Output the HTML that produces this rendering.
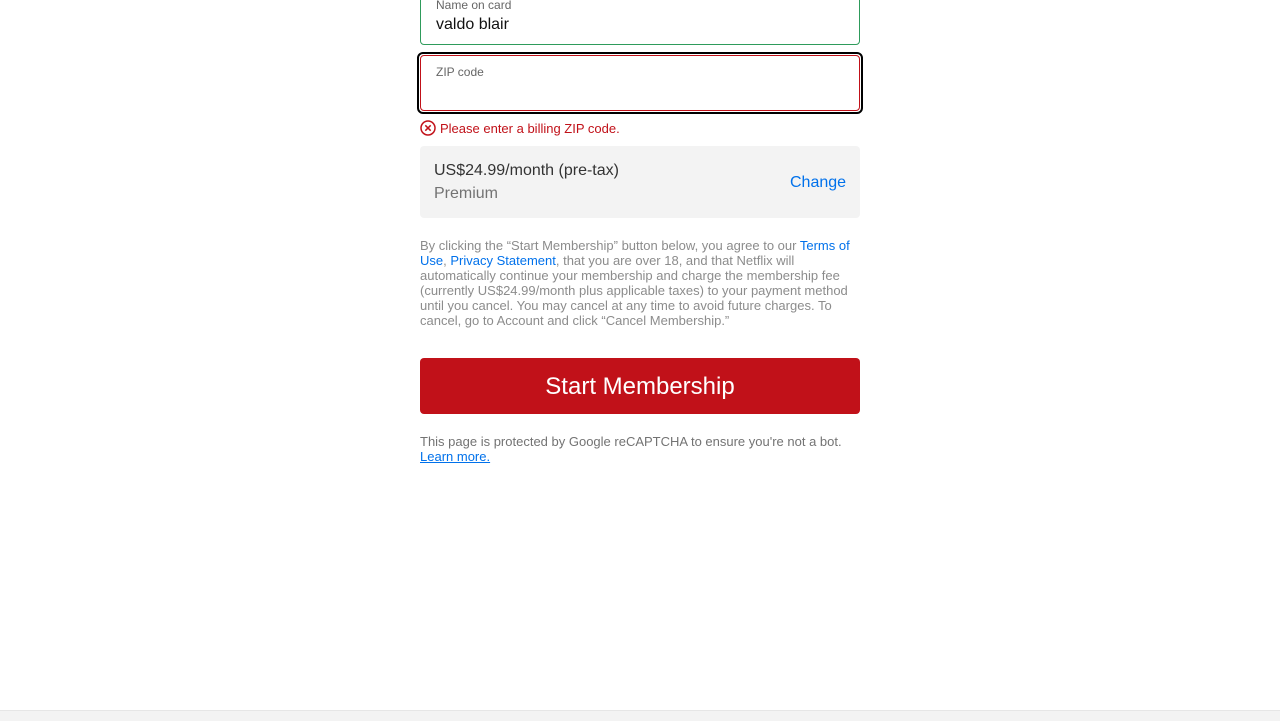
<!DOCTYPE html>
<html><head><style>
body{margin:0;width:1280px;height:720px;position:relative;background:#fff;font-family:"Liberation Sans",Arial,sans-serif;overflow:hidden}
.abs{position:absolute}
a{color:#0071eb;text-decoration:none}
</style></head><body>
<div class="abs" style="left:420px;top:-10px;width:438px;height:53px;border:1px solid #2e9b5b;border-radius:4px"></div>
<div class="abs" style="left:436px;top:-2px;font-size:12px;color:#666">Name on card</div>
<div class="abs" style="left:436px;top:16px;font-size:16px;color:#111">valdo blair</div>
<div class="abs" style="left:417px;top:52px;width:442px;height:58px;border:2px solid #000;border-radius:6px"></div>
<div class="abs" style="left:420px;top:55px;width:438px;height:54px;border:1px solid #c11119;border-radius:4px"></div>
<div class="abs" style="left:436px;top:65px;font-size:12px;color:#666">ZIP code</div>
<svg class="abs" style="left:420px;top:120px" width="16" height="16" viewBox="0 0 16 16"><circle cx="8" cy="8" r="7" fill="none" stroke="#c11119" stroke-width="1.5"/><path d="M5.3 5.3L10.7 10.7M10.7 5.3L5.3 10.7" stroke="#c11119" stroke-width="1.5"/></svg>
<div class="abs" style="left:440px;top:121px;font-size:13px;color:#c11119">Please enter a billing ZIP code.</div>
<div class="abs" style="left:420px;top:146px;width:440px;height:72px;background:#f3f3f3;border-radius:4px"></div>
<div class="abs" style="left:434px;top:162px;font-size:16px;color:#333">US$24.99/month (pre-tax)</div>
<div class="abs" style="left:434px;top:185px;font-size:16px;color:#737373">Premium</div>
<div class="abs" style="left:790px;top:174px;font-size:16px;color:#0071eb">Change</div>
<div class="abs" style="left:420px;top:238px;width:440px;font-size:13px;line-height:15px;color:#8c8c8c">By clicking the “Start Membership” button below, you agree to our <a>Terms of Use</a>, <a>Privacy Statement</a>, that you are over 18, and that Netflix will automatically continue your membership and charge the membership fee (currently US$24.99/month plus applicable taxes) to your payment method until you cancel. You may cancel at any time to avoid future charges. To cancel, go to Account and click “Cancel Membership.”</div>
<div class="abs" style="left:420px;top:358px;width:440px;height:56px;background:#c11119;border-radius:4px;color:#fff;font-size:24px;line-height:57px;text-align:center">Start Membership</div>
<div class="abs" style="left:420px;top:434px;width:440px;font-size:13px;line-height:15px;color:#737373">This page is protected by Google reCAPTCHA to ensure you're not a bot. <a style="text-decoration:underline">Learn more.</a></div>
<div class="abs" style="left:0;top:710px;width:1280px;height:10px;background:#f3f3f3;border-top:1px solid #e6e6e6"></div>
</body></html>
